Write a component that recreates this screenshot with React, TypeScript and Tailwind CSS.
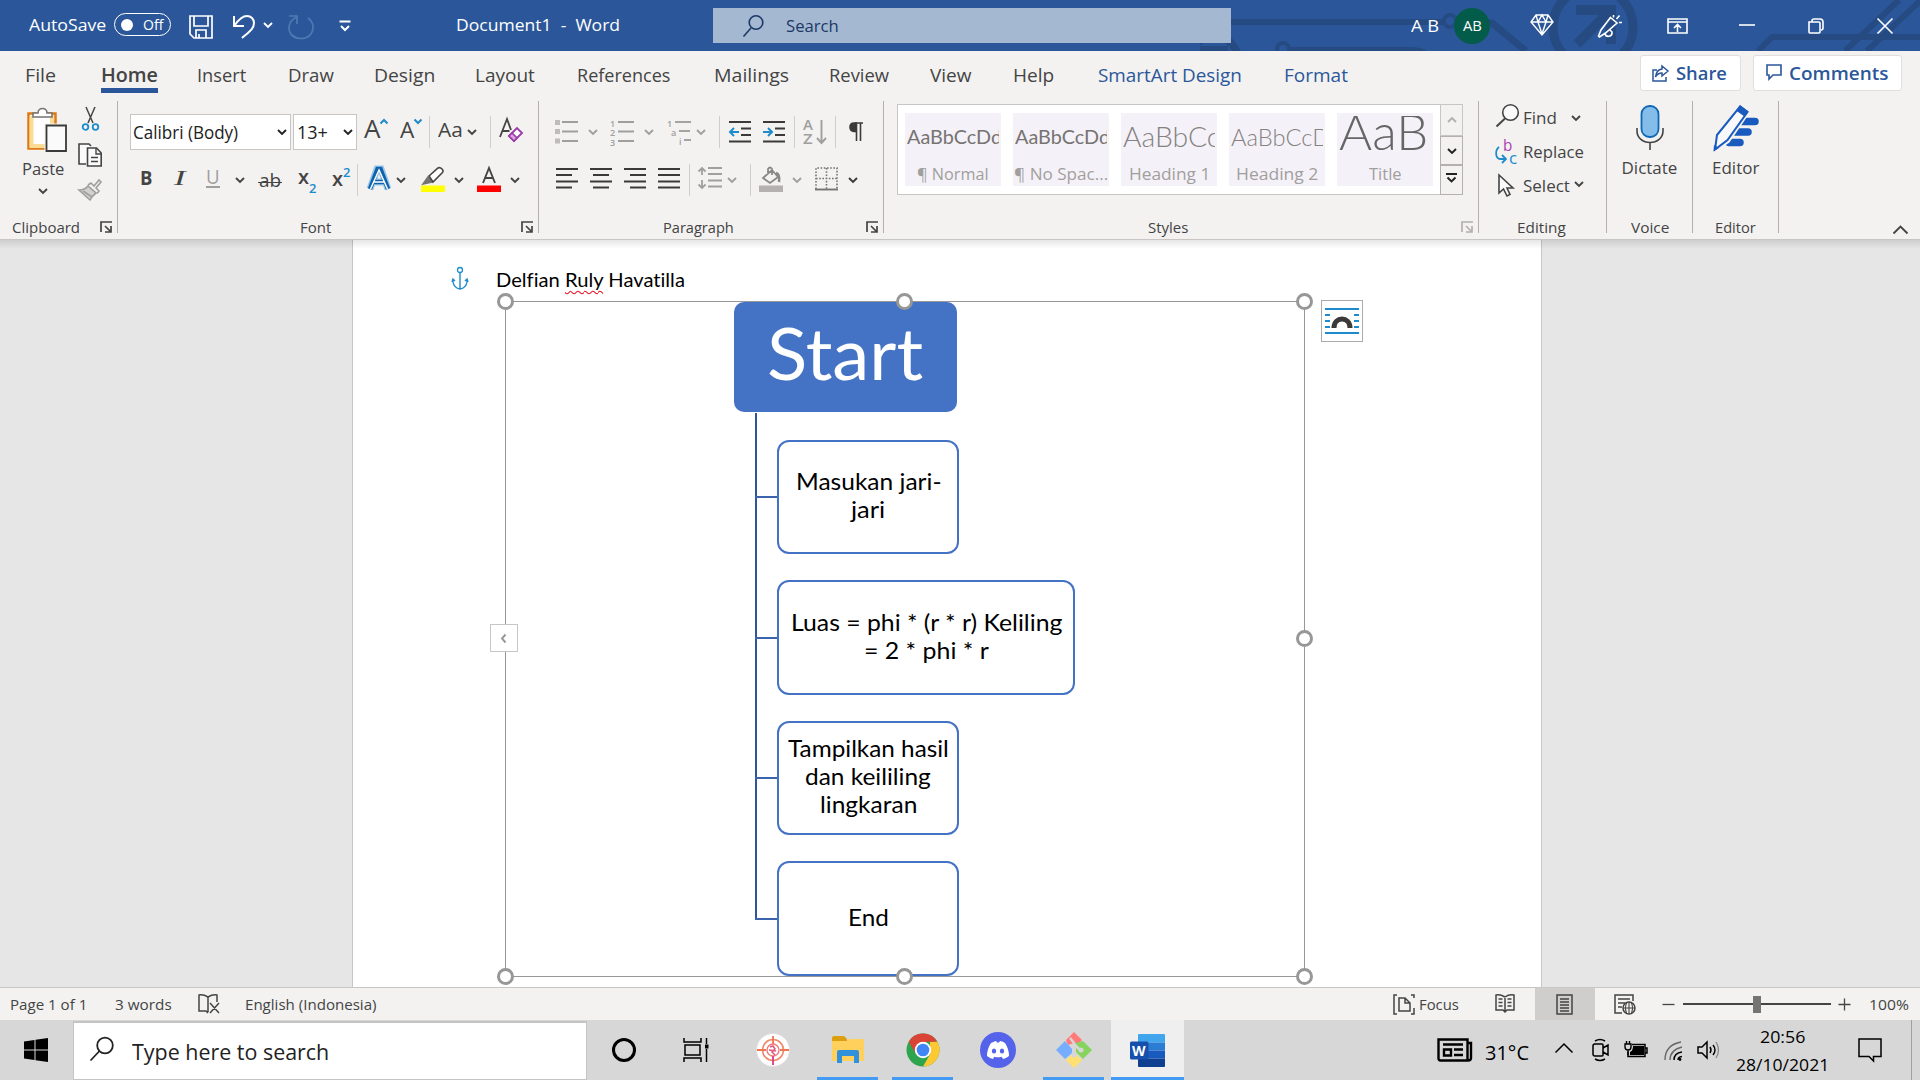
import { useLayoutEffect, useRef, useState, type ReactNode } from "react";

const UI = "font-['Open_Sans','Noto_Sans',sans-serif]";
const BODY = "font-['Lato','Open_Sans',sans-serif] [font-variant-ligatures:none]";

/* A single line of text condensed or widened to an exact advance width. */
function Fit({ w, className = "", children }: { w: number; className?: string; children: ReactNode }) {
  const ref = useRef<HTMLSpanElement>(null);
  const [scale, setScale] = useState(1);
  useLayoutEffect(() => {
    const natural = ref.current?.offsetWidth ?? w;
    if (natural) setScale(w / natural);
  }, [w]);
  return (
    <span className={`block shrink-0 whitespace-pre ${className}`} style={{ width: w }}>
      <span ref={ref} className="inline-block origin-left" style={{ transform: `scaleX(${scale})` }}>
        {children}
      </span>
    </span>
  );
}

function Ico({ w, h, className = "", children }: { w: number; h: number; className?: string; children: ReactNode }) {
  return (
    <svg width={w} height={h} viewBox={`0 0 ${w} ${h}`} fill="none" stroke="currentColor" strokeWidth="1.6" className={`block shrink-0 overflow-visible ${className}`}>
      {children}
    </svg>
  );
}

function Chev({ className = "" }: { className?: string }) {
  return (
    <Ico w={10} h={6} className={className}>
      <path d="M1 1l4 4 4-4" strokeWidth="1.9" />
    </Ico>
  );
}

function Div({ className = "" }: { className?: string }) {
  return <div className={`h-8 w-px shrink-0 bg-[#d0cecc] ${className}`} />;
}

function Launcher({ className = "" }: { className?: string }) {
  return (
    <Ico w={12} h={12} className={className}>
      <path d="M1 11V1h11M5 5l5.500 5.500M11 5v6H5" strokeWidth="1.7" />
    </Ico>
  );
}

function TitleBar() {
  return (
    <header className="relative h-[51px] overflow-hidden bg-[#2b579a] text-white">
      <svg className="absolute top-0 right-0" width="720" height="51" fill="none" stroke="#264b82" strokeWidth="6">
        <path d="M30 22h213" />
        <circle cx="250" cy="21" r="6" strokeWidth="4" />
        <path d="M286 23h6l34 28" strokeWidth="7" />
        <path d="M90 49h120q12 0 16 4" strokeWidth="4" />
        <circle cx="83" cy="49" r="6" strokeWidth="4" />
        <circle cx="14" cy="60" r="24" strokeWidth="8" />
        <path d="M0 49h28" strokeWidth="6" />
        <circle cx="393" cy="27" r="40" strokeWidth="9" />
        <path d="M376 10h35v34M409 12l-32 32" strokeWidth="10" />
        <path d="M558 51l14-14h148M645 51l54-51M667 51l54-51" strokeWidth="6" />
      </svg>
      <div className="relative flex h-[49px] items-center pl-[29px] text-[17px] leading-none">
        <Fit w={77}>AutoSave</Fit>
        <div className="ml-2 flex h-[23px] w-[57px] shrink-0 items-center rounded-full border border-white pl-[6px]">
          <div className="size-3 rounded-full bg-white" />
          <Fit w={20} className="ml-[10px] text-[14px]">Off</Fit>
        </div>
        <Ico w={24} h={24} className="mt-1 ml-[18px]">
          <path d="M1 1h22v22H5l-4-4zM5 1v10h14V1M7 23v-8h10v8M10 23v-4" strokeWidth="1.7" />
        </Ico>
        <Ico w={22} h={24} className="mt-1 ml-5">
          <path d="M1 1v10h10M1.500 10.500C6 4 10 1 14 1c4 0 7 3 7 7 0 6-5 9-12 15" strokeWidth="2" />
        </Ico>
        <Chev className="mt-px ml-2" />
        <Ico w={26} h={24} className="mt-1 ml-[15px] text-[#5079b3]">
          <path d="M1 1h8v8M9 2C4 4 1 8 1 13c0 6 5 10.500 12 10.500S25 19 25 12c0-4-2-7-5-9" strokeWidth="1.7" />
        </Ico>
        <Ico w={12} h={11} className="mt-[2px] ml-[25px]">
          <path d="M0.500 1.500h11M2 6l4 4 4-4" strokeWidth="2" />
        </Ico>
        <Fit w={164} className="ml-[105px]">{"Document1  -  Word"}</Fit>
        <div className="mt-[2px] ml-[93px] flex h-[35px] w-[518px] shrink-0 items-center bg-[#a5b8d1] pl-[30px] text-[#1b3866]">
          <Ico w={21} h={22}>
            <circle cx="13" cy="7.500" r="6.800" />
            <path d="M8 13l-7.500 8.500" />
          </Ico>
          <Fit w={53} className="ml-[22px]">Search</Fit>
        </div>
        <Fit w={28} className="mt-[2px] ml-[180px]">A B</Fit>
        <div className="mt-[2px] ml-[15px] flex size-9 shrink-0 items-center justify-center rounded-full bg-[#035c4a] text-[14px]">
          <Fit w={19}>AB</Fit>
        </div>
        <Ico w={24} h={22} className="ml-10">
          <path d="M6 1h12l5 7-11 13L1 8zM1 8h22M8 8l4 12 4-12M6 1l2 7 4-7 4 7 2-7" strokeWidth="1.400" />
        </Ico>
        <Ico w={25} h={24} className="mt-[2px] ml-11">
          <path d="M12.500 3.500l6.500 5.500-11.500 10-6 4-1-1 2.500-6zM7 19.500c1 4.500 7.500 3.500 7-1.500l-2-2M15.500 3.500V1M18.500 5l3-3.500M21 8.500h3" strokeWidth="1.600" />
        </Ico>
        <Ico w={21} h={16} className="mt-[2px] ml-11">
          <path d="M1 1h19v14H1zM1 4h19M10.500 14V7M7 10l3.500-3.500L14 10" strokeWidth="1.600" />
        </Ico>
        <Ico w={16} h={2} className="ml-[51px]"><path d="M0 1h16" /></Ico>
        <Ico w={16} h={16} className="mt-[2px] ml-[53px]">
          <path d="M1 4h10q1 0 1 1v9q0 1-1 1H2q-1 0-1-1zM4 4V3q0-2 2-2h6q3 0 3 3v6q0 2-2 2" />
        </Ico>
        <Ico w={16} h={16} className="mt-[2px] ml-[53px]"><path d="M0.500 0.500l15 15M15.500 0.500l-15 15" /></Ico>
      </div>
    </header>
  );
}

function Tabs() {
  return (
    <nav className="flex h-[50px] items-start pt-[11px] pl-[25px] text-[19px] leading-[26px] text-[#444444]">
      <Fit w={31}>File</Fit>
      <div className="ml-[45px] w-[57px] shrink-0">
        <Fit w={57} className="font-semibold">Home</Fit>
        <div className="h-[5px] bg-[#2b579a]" />
      </div>
      <Fit w={49} className="ml-[39px]">Insert</Fit>
      <Fit w={46} className="ml-[42px]">Draw</Fit>
      <Fit w={61} className="ml-10">Design</Fit>
      <Fit w={60} className="ml-[40px]">Layout</Fit>
      <Fit w={93} className="ml-[42px]">References</Fit>
      <Fit w={75} className="ml-[44px]">Mailings</Fit>
      <Fit w={60} className="ml-[40px]">Review</Fit>
      <Fit w={42} className="ml-[41px]">View</Fit>
      <Fit w={41} className="ml-[41px]">Help</Fit>
      <Fit w={144} className="ml-[44px] text-[#2b579a]">SmartArt Design</Fit>
      <Fit w={64} className="ml-[42px] text-[#2b579a]">Format</Fit>
      <div className="-mt-[7px] ml-[292px] flex h-9 w-[101px] shrink-0 items-center rounded-[3px] border border-[#e1dfdd] bg-white pl-[11px] text-[18px] font-semibold text-[#2b579a]">
        <Ico w={17} h={17}>
          <path d="M5 5H1v11h13v-4M10 1l6 5-6 5V8C7 8 5 9 3.500 12 4 7 6 4.500 10 4z" strokeWidth="1.500" />
        </Ico>
        <Fit w={51} className="ml-[7px]">Share</Fit>
      </div>
      <div className="-mt-[7px] ml-3 flex h-9 w-[149px] shrink-0 items-center rounded-[3px] border border-[#e1dfdd] bg-white pl-3 text-[18px] font-semibold text-[#2b579a]">
        <Ico w={16} h={16} className="-mt-[2px]"><path d="M1 1h14v10H7l-4 4v-4H1z" strokeWidth="1.600" /></Ico>
        <Fit w={99} className="ml-[7px]">Comments</Fit>
      </div>
    </nav>
  );
}

function Group({ className, label, children }: { className: string; label: ReactNode; children: ReactNode }) {
  return (
    <section className={`flex h-[132px] shrink-0 flex-col border-r border-[#b3b0ad] ${className}`}>
      {children}
      <div className="mt-auto flex h-3 items-center text-[15px] leading-none">{label}</div>
    </section>
  );
}

function ClipboardGroup() {
  return (
    <Group className="w-[118px]" label={<><Fit w={68} className="ml-[12px]">Clipboard</Fit><Launcher className="ml-5" /></>}>
      <div className="flex pt-[6px]">
        <div className="ml-[21px] flex w-[43px] flex-col items-center">
          <Ico w={41} h={45} className="ml-2">
            <path d="M2.500 6.500h27v35h-27z" fill="#fff" stroke="#e07914" strokeWidth="2.500" />
            <path d="M5.500 9v30h21" stroke="#fbdc94" strokeWidth="4" />
            <path d="M26 8v11" stroke="#fbdc94" strokeWidth="4" />
            <path d="M7 10V6h5c0-6 9-6 9 0h5v4z" fill="#fff" stroke="#767472" />
            <path d="M20.500 18.500h20v26h-20z" fill="#fafafa" stroke="#f3f2f1" strokeWidth="4" />
            <path d="M20.500 18.500h19.500v25.500h-19.500z" fill="#fafafa" stroke="#3b3a39" strokeWidth="1.800" />
          </Ico>
          <Fit w={42} className="mt-[7px] text-[17px] leading-[20px]">Paste</Fit>
          <Chev className="mt-[9px]" />
        </div>
        <div className="ml-[14px] flex w-6 flex-col items-center">
          <Ico w={17} h={24}>
            <path d="M4 0l7 16M13 0L6 16" strokeWidth="1.500" />
            <circle cx="3.500" cy="20" r="2.800" stroke="#1e8bcd" strokeWidth="1.800" />
            <circle cx="13.500" cy="20" r="2.800" stroke="#1e8bcd" strokeWidth="1.800" />
          </Ico>
          <Ico w={24} h={24} className="mt-3">
            <path d="M8 21H1V1h10l2 2" fill="#fafafa" />
            <path d="M9.500 5h9l4.700 5v13H9.500z" fill="#fafafa" />
            <path d="M18 5v6h5M13 14.500h7M13 18.500h7" strokeWidth="1.400" />
          </Ico>
          <Ico w={24} h={22} className="mt-3 text-[#a19f9d]">
            <path d="M1 11q6 0 9-4l8 7q-4 3-6 7z" fill="#d2d0ce" />
            <path d="M10 6l3-2 3 3 5-6 2 2-5 6 3 3-2 2.500M5 12l9 6" />
          </Ico>
        </div>
      </div>
    </Group>
  );
}

function FontGroup() {
  return (
    <Group className="w-[421px]" label={<><Fit w={31} className="ml-[182px]">Font</Fit><Launcher className="ml-[190px]" /></>}>
      <div className="mt-[13px] flex h-[35px] items-center">
        <div className="ml-3 flex h-9 w-[161px] shrink-0 items-center border border-[#c8c6c4] bg-white pl-[2px] text-[18px] leading-none text-[#222]">
          <Fit w={105}>Calibri (Body)</Fit>
          <Chev className="ml-[39px]" />
        </div>
        <div className="ml-[2px] flex h-9 w-16 shrink-0 items-center border border-[#c8c6c4] bg-white pl-[3px] text-[18px] leading-none text-[#222]">
          <Fit w={31}>13+</Fit>
          <Chev className="ml-[15px]" />
        </div>
        <div className="ml-[7px] flex h-[28px] w-[23px] shrink-0 items-start">
          <Fit w={16} className="-mt-[4px] text-[26px] leading-[28px]">A</Fit>
          <Ico w={8} h={5} className="mt-px text-[#1e8bcd]"><path d="M0.500 4.500l3.500-3.500 3.500 3.500" strokeWidth="2" /></Ico>
        </div>
        <div className="ml-[13px] flex h-[28px] w-[21px] shrink-0 items-start">
          <Fit w={14} className="-mt-[2px] text-[21px] leading-[28px]">A</Fit>
          <Ico w={8} h={5} className="mt-px text-[#1e8bcd]"><path d="M0.500 0.500l3.500 3.500 3.500-3.500" strokeWidth="2" /></Ico>
        </div>
        <Div className="ml-[8px]" />
        <Fit w={25} className="-mt-[3px] ml-2 text-[20px] leading-none">Aa</Fit>
        <Chev className="ml-1" />
        <Div className="ml-[13px]" />
        <Ico w={23} h={24} className="-mt-[3px] ml-[8px]">
          <path d="M1 19L8 1l4 11M3.500 13h7" strokeWidth="1.800" />
          <path d="M10 18l8-8 5 5-8 8z" fill="#fff" stroke="#9b3aa8" strokeWidth="1.900" />
          <path d="M10 18l3-3 5 5-3 3z" fill="#d6a8dc" stroke="#9b3aa8" />
        </Ico>
      </div>
      <div className="mt-[14px] flex h-[34px] items-center text-[20px] leading-none">
        <Fit w={12} className="-mt-1 ml-[22px] font-bold">B</Fit>
        <Fit w={11} className="-mt-1 ml-[22px] font-['Liberation_Serif',serif] text-[22px] italic">I</Fit>
        <div className="-mt-px ml-[21px] flex w-[14px] shrink-0 flex-col text-[#a19f9d]">
          <Fit w={14} className="-mt-1 h-[19px]">U</Fit>
          <div className="h-[2px] bg-[#a19f9d]" />
        </div>
        <Chev className="ml-[15px]" />
        <div className="relative ml-[13px] w-6 shrink-0">
          <Fit w={22} className="ml-px text-[19px]">ab</Fit>
          <div className="absolute top-[11px] h-[1.500px] w-6 bg-[#444]" />
        </div>
        <div className="ml-[16px] flex w-[18px] shrink-0 items-end">
          <Fit w={11} className="mb-[6px] font-semibold">x</Fit>
          <Fit w={7} className="-mb-[2px] text-[13px] font-semibold text-[#1e8bcd]">2</Fit>
        </div>
        <div className="ml-[16px] flex w-[18px] shrink-0 items-end">
          <Fit w={11} className="mb-[6px] font-semibold">x</Fit>
          <Fit w={7} className="mb-[16px] text-[13px] font-semibold text-[#1e8bcd]">2</Fit>
        </div>
        <Div className="ml-[7px]" />
        <Ico w={23} h={24} className="-mt-[2px] ml-[9px]">
          <path d="M3 22L10 2h4l7 20M7 15h10" stroke="#9bc8ec" strokeWidth="7" />
          <path d="M3 22L10.500 2h3L21 22M7 15h10" stroke="#0f63ac" strokeWidth="4.500" />
          <path d="M3.500 22L12 3l8.500 19M7 15h10" stroke="#fff" strokeWidth="1.500" />
        </Ico>
        <Chev className="ml-[6px]" />
        <Ico w={24} h={25} className="-mt-[2px] ml-[15px]">
          <path d="M0 18.500h24v6.500H0z" fill="#ffff00" stroke="none" />
          <path d="M7 10l-5 7 9-2z" fill="#767472" stroke="#767472" />
          <path d="M8 9L17 1q2-1 4 1 2 2 0 4l-9 9z" fill="#fff" />
        </Ico>
        <Chev className="ml-[9px]" />
        <Ico w={24} h={25} className="-mt-[2px] ml-[13px]">
          <path d="M0 18.500h24v6.500H0z" fill="#ff0000" stroke="none" />
          <path d="M6 16L12 1l6 15M8.500 11h7" strokeWidth="1.900" />
        </Ico>
        <Chev className="ml-[9px]" />
      </div>
    </Group>
  );
}

function ParagraphGroup() {
  return (
    <Group className="w-[345px]" label={<><Fit w={71} className="ml-[124px]">Paragraph</Fit><Launcher className="ml-[132px]" /></>}>
      <div className="mt-[13px] flex h-[35px] items-center text-[#a19f9d]">
        <Ico w={23} h={24} className="ml-4">
          <path d="M7 2h16M7 11.500h16M7 21h16" strokeWidth="1.900" />
          <path d="M0 0h5v5H0zM0 9h5v5H0zM0 18.500h5v5H0z" fill="#bebbb8" stroke="none" />
        </Ico>
        <Chev className="mt-px ml-[10px]" />
        <div className="ml-3 flex h-[24px] shrink-0 gap-[3px]">
          <div className="-mt-px flex w-[5px] flex-col text-[9px] leading-[9.500px] font-semibold"><span>1</span><span>2</span><span>3</span></div>
          <Ico w={16} h={24}><path d="M0 2h16M0 11.500h16M0 21h16" strokeWidth="1.900" /></Ico>
        </div>
        <Chev className="mt-px ml-[10px]" />
        <div className="ml-[13px] flex h-6 w-[23px] shrink-0 flex-col text-[9px] leading-[9.500px] font-semibold">
          <div className="flex gap-[3px]"><span className="-mt-px">1</span><Ico w={16} h={9}><path d="M0 2h16" strokeWidth="1.900" /></Ico></div>
          <div className="ml-1 flex gap-[3px]"><span className="-mt-px">a</span><Ico w={11} h={9}><path d="M0 2h11" strokeWidth="1.900" /></Ico></div>
          <div className="ml-3 flex gap-[2px]"><span className="-mt-px">i</span><Ico w={7} h={9}><path d="M0 2h7" strokeWidth="1.900" /></Ico></div>
        </div>
        <Chev className="mt-px ml-[6px]" />
        <Div className="ml-[13px]" />
        <Ico w={22} h={22} className="ml-[9px] text-[#3b3a39]">
          <path d="M0 1h22M12 7.500h10M12 14h10M0 20.500h22" strokeWidth="1.900" />
          <path d="M10 11H1M5 7l-4 4 4 4" stroke="#1e8bcd" strokeWidth="2" />
        </Ico>
        <Ico w={22} h={22} className="ml-3 text-[#3b3a39]">
          <path d="M0 1h22M12 7.500h10M12 14h10M0 20.500h22" strokeWidth="1.900" />
          <path d="M0 11h9M5 7l4 4-4 4" stroke="#1e8bcd" strokeWidth="2" />
        </Ico>
        <Div className="ml-[9px]" />
        <div className="ml-2 flex h-[26px] w-[25px] shrink-0 items-center gap-[2px]">
          <div className="-mt-[2px] flex w-[11px] flex-col text-[15px] leading-[14px] font-semibold"><Fit w={10}>A</Fit><Fit w={10}>Z</Fit></div>
          <Ico w={11} h={24}><path d="M5.500 0v23M1 18l4.500 5 4.500-5" strokeWidth="1.900" /></Ico>
        </div>
        <Div className="ml-[7px]" />
        <Ico w={14} h={19} className="ml-[13px] text-[#3b3a39]">
          <path d="M7 1h-2q-4 0-4 4t4 4.500h2z" fill="currentColor" />
          <path d="M7.500 1v18M11.500 1v18M6 1h8" />
        </Ico>
      </div>
      <div className="mt-[14px] flex h-[34px] items-center text-[#3b3a39]">
        <Ico w={22} h={21} className="-mt-1 ml-[17px]"><path d="M0 1h22M0 7h16M0 13.500h22M0 19.500h16" strokeWidth="1.900" /></Ico>
        <Ico w={22} h={21} className="-mt-1 ml-3"><path d="M0 1h22M3 7h16M0 13.500h22M3 19.500h16" strokeWidth="1.900" /></Ico>
        <Ico w={22} h={21} className="-mt-1 ml-3"><path d="M0 1h22M6 7h16M0 13.500h22M6 19.500h16" strokeWidth="1.900" /></Ico>
        <Ico w={22} h={21} className="-mt-1 ml-3"><path d="M0 1h22M0 7h22M0 13.500h22M0 19.500h22" strokeWidth="1.900" /></Ico>
        <Div className="ml-[9px]" />
        <Ico w={24} h={22} className="-mt-1 ml-2 text-[#a19f9d]"><path d="M10 1h14M10 7h14M10 13.500h14M10 19.500h14M4 1v7M4 13v8M0.500 4.500L4 1l3.500 3.500M0.500 17.500L4 21l3.500-3.500" strokeWidth="1.800" /></Ico>
        <Chev className="ml-[5px] text-[#a19f9d]" />
        <Div className="ml-[13px]" />
        <Ico w={24} h={25} className="-mt-[2px] ml-2 text-[#8a8886]">
          <path d="M0 18.500h24v6.500H0z" fill="#b5b1ae" stroke="none" />
          <path d="M4 11L13 3l6 7-8 6zM9 8V2q2-3 4 0v6" strokeWidth="1.800" />
          <path d="M17 6q4 1 3 9" strokeWidth="2.500" />
        </Ico>
        <Chev className="ml-[9px] text-[#a19f9d]" />
        <Ico w={23} h={24} className="-mt-[2px] ml-[13px] text-[#767472]">
          <path d="M1 22V1h21v21M11.500 1v21M1 11.500h21" strokeDasharray="1.600 1.600" />
          <path d="M0 22.500h23" strokeWidth="1.900" />
        </Ico>
        <Chev className="ml-[10px]" />
      </div>
    </Group>
  );
}

function StyleCard({ preview, label }: { preview: ReactNode; label: ReactNode }) {
  return (
    <div className="flex h-[73px] w-24 shrink-0 flex-col bg-[#f5f1f8] pt-[3px]">
      <div className={`ml-[2px] flex h-[45px] w-[92px] items-center overflow-hidden text-[#767472] ${BODY}`}>{preview}</div>
      <div className="flex h-[25px] items-center justify-center text-[16px] leading-none text-[#a19f9d]">{label}</div>
    </div>
  );
}

function StylesGroup() {
  return (
    <Group className="w-[595px]" label={<><Fit w={40} className="ml-[264px]">Styles</Fit><Launcher className="ml-[273px] text-[#b3b0ad]" /></>}>
      <div className="mt-[3px] ml-[13px] flex h-[91px] w-[566px] border border-[#c8c6c4] bg-white">
        <div className="flex w-[542px] shrink-0 gap-3 pt-2 pl-[7px]">
          <StyleCard preview={<Fit w={95} className="-mt-[5px] text-[20px] leading-[24px]">AaBbCcDd</Fit>} label={<Fit w={72}>¶ Normal</Fit>} />
          <StyleCard preview={<Fit w={95} className="-mt-[5px] text-[20px] leading-[24px]">AaBbCcDd</Fit>} label={<Fit w={94}>¶ No Spac...</Fit>} />
          <StyleCard preview={<Fit w={97} className="-mt-[5px] text-[28px] leading-none font-light text-[#858381]">AaBbCc</Fit>} label={<Fit w={81}>Heading 1</Fit>} />
          <StyleCard preview={<Fit w={99} className="-mt-[3px] text-[23px] leading-none font-light text-[#858381]">AaBbCcD</Fit>} label={<Fit w={82}>Heading 2</Fit>} />
          <StyleCard preview={<Fit w={89} className="-mt-[16px] text-[50px] leading-none font-light text-[#666]">AaB</Fit>} label={<Fit w={33}>Title</Fit>} />
        </div>
        <div className="-my-px -mr-px flex w-[23px] shrink-0 flex-col text-[#222]">
          <div className="flex h-8 items-center justify-center border border-[#c8c6c4] bg-[#f3f2f1] text-[#b3b0ad]"><Chev className="rotate-180" /></div>
          <div className="flex h-[29px] items-center justify-center border border-[#b3b0ad] bg-[#f3f2f1]"><Chev /></div>
          <div className="flex h-[30px] items-center justify-center border border-[#b3b0ad] bg-[#f3f2f1]">
            <Ico w={11} h={10} className="-mt-1"><path d="M0 1h11M1.500 4.500l4 4 4-4" strokeWidth="1.900" /></Ico>
          </div>
        </div>
      </div>
    </Group>
  );
}

function EditingGroup() {
  return (
    <Group className="w-[128px]" label={<Fit w={49} className="ml-[38px]">Editing</Fit>}>
      <div className="flex flex-col text-[17px] leading-none">
        <div className="flex h-[33px] items-center pl-[17px]">
          <Ico w={23} h={23} className="-mt-1">
            <circle cx="14.500" cy="8.500" r="7.800" fill="#fafafa" />
            <path d="M9 14.500L0.500 22.500" strokeWidth="1.900" />
          </Ico>
          <Fit w={34} className="-mt-px ml-1">Find</Fit>
          <Chev className="ml-[14px]" />
        </div>
        <div className="flex h-[35px] items-center pl-4">
          <div className="flex h-[25px] w-[22px] shrink-0 items-end">
            <Ico w={12} h={19}><path d="M4 2C0 5 0 13 5 14h6M7 10l4 4-4 4" stroke="#1e8bcd" strokeWidth="1.800" /></Ico>
            <div className="-ml-1 flex w-[13px] flex-col text-[17px] leading-[12px]">
              <Fit w={9} className="text-[#a83fb0]">b</Fit>
              <Fit w={8} className="mt-px ml-[6px] text-[#1e8bcd]">c</Fit>
            </div>
          </div>
          <Fit w={61} className="ml-[6px]">Replace</Fit>
        </div>
        <div className="flex h-[34px] items-center pl-[19px]">
          <Ico w={16} h={23} className="-mt-[2px]"><path d="M1 1v18l4.500-4 3.500 7 3-1.500-3-6.500h6z" fill="#fafafa" /></Ico>
          <Fit w={47} className="-mt-[2px] ml-[9px]">Select</Fit>
          <Chev className="-mt-[4px] ml-1" />
        </div>
      </div>
    </Group>
  );
}

function Ribbon() {
  return (
    <div className="flex h-[138px] text-[#444444]">
      <ClipboardGroup />
      <FontGroup />
      <ParagraphGroup />
      <StylesGroup />
      <EditingGroup />
      <Group className="w-[86px]" label={<Fit w={38} className="ml-6">Voice</Fit>}>
        <div className="flex flex-col items-center pt-1">
          <Ico w={28} h={45}>
            <rect x="5.500" y="1" width="17" height="31" rx="8" fill="#85bdea" stroke="#1068b5" strokeWidth="1.800" />
            <path d="M1 23v3c0 7 6 11.500 13 11.500S27 33 27 26v-3M14 37.500V45" />
          </Ico>
          <Fit w={56} className="mt-2 text-[17px] leading-[20px]">Dictate</Fit>
        </div>
      </Group>
      <Group className="w-[86px]" label={<Fit w={41} className="ml-[22px]">Editor</Fit>}>
        <div className="flex flex-col items-center pt-1">
          <Ico w={46} h={46}>
            <path d="M27 16.500h15M22 27h13M16 37.500h11" stroke="#185abd" strokeWidth="7.500" strokeLinecap="round" />
            <path d="M27 1l8 6-20 29-13 9 2-15z" fill="#f9f9fb" stroke="#f3f2f1" strokeWidth="4" />
            <path d="M27 1.500l7.500 5.500-20 28L2 44.500l2-14.500z" fill="#f9f9fb" stroke="#185abd" strokeWidth="2" />
            <path d="M27 0l8.500 6.500-4 5L23 5.500zM1 40l5 3-5.500 3z" fill="#185abd" stroke="none" />
          </Ico>
          <Fit w={47} className="mt-[7px] text-[17px] leading-[20px]">Editor</Fit>
        </div>
      </Group>
      <Ico w={15} h={8} className="mt-[125px] ml-[114px]"><path d="M0.500 7.500l7-7 7 7" strokeWidth="1.800" /></Ico>
    </div>
  );
}

function Handle({ className }: { className: string }) {
  return <div className={`absolute size-[17px] rounded-full border-[3px] border-[#979797] bg-white ${className}`} />;
}

function Node({ className, lines }: { className: string; lines: [string, number][] }) {
  return (
    <div className={`absolute left-[424px] flex flex-col items-center justify-center rounded-[12px] border-2 border-[#4472c4] bg-white pb-[2px] text-[22.500px] leading-[28px] ${BODY} ${className}`}>
      {lines.map(([text, w]) => (
        <Fit key={text} w={w}>{text}</Fit>
      ))}
    </div>
  );
}

function Page() {
  return (
    <main className="h-[747px] overflow-hidden bg-[#e6e6e6]">
      <div className="relative ml-[352px] h-full w-[1190px] border-x border-[#c6c6c6] bg-white text-black">
        <Ico w={16} h={23} className="absolute top-[27px] left-[99px] text-[#1e8bcd]">
          <circle cx="8" cy="3" r="2.500" strokeWidth="1.300" />
          <path d="M8 5.500V22M1 12v3q1 6 7 7 6-1 7-7v-3M0 15l1-3 2 2M16 15l-1-3-2 2" strokeWidth="1.400" />
        </Ico>
        <div className={`absolute top-[28px] left-[143px] flex text-[19px] leading-[24px] ${BODY}`}>
          <Fit w={189}>
            Delfian <span className="underline decoration-[#e81123] decoration-wavy decoration-[1px] underline-offset-[3px]">Ruly</span> Havatilla
          </Fit>
        </div>

        <div className="absolute top-[61px] left-[152px] h-[676px] w-[800px] border border-[#979797]" />
        <div className={`absolute top-[62px] left-[381px] flex h-[110px] w-[223px] justify-center rounded-[10px] bg-[#4472c4] pt-[7px] text-[72px] leading-[86px] text-white ${BODY}`}>
          <Fit w={156} className="-ml-[2px]">Start</Fit>
        </div>
        <div className="absolute top-[173px] left-[402px] h-[507px] w-[2px] bg-[#2f5597]" />
        <div className="absolute top-[256px] left-[402px] h-[2px] w-[23px] bg-[#3c64ac]" />
        <div className="absolute top-[397px] left-[402px] h-[2px] w-[23px] bg-[#3c64ac]" />
        <div className="absolute top-[537px] left-[402px] h-[2px] w-[23px] bg-[#3c64ac]" />
        <div className="absolute top-[678px] left-[402px] h-[2px] w-[23px] bg-[#3c64ac]" />
        <Node className="top-[200px] h-[114px] w-[182px]" lines={[["Masukan jari-", 145], ["jari", 34]]} />
        <Node className="top-[340px] h-[115px] w-[298px]" lines={[["Luas = phi * (r * r) Keliling", 271], ["= 2 * phi * r", 125]]} />
        <Node className="top-[481px] h-[114px] w-[182px]" lines={[["Tampilkan hasil", 161], ["dan keililing", 126], ["lingkaran", 97]]} />
        <Node className="top-[621px] h-[115px] w-[182px]" lines={[["End", 41]]} />

        <Handle className="top-[53px] left-[144px]" />
        <Handle className="top-[53px] left-[543px]" />
        <Handle className="top-[53px] left-[943px]" />
        <Handle className="top-[390px] left-[943px]" />
        <Handle className="top-[728px] left-[144px]" />
        <Handle className="top-[728px] left-[543px]" />
        <Handle className="top-[728px] left-[943px]" />
        <div className="absolute top-[384px] left-[137px] flex h-7 w-7 items-center justify-center border border-[#c6c6c6] bg-white pr-[2px] text-[#979797]">
          <Ico w={5} h={9}><path d="M4.500 0.500l-3.500 4 3.500 4" strokeWidth="1.900" /></Ico>
        </div>
        <div className="absolute top-[60px] left-[968px] flex size-[42px] items-center justify-center border border-[#ababab] bg-white">
          <Ico w={34} h={26}>
            <path d="M0 1h34M0 7h5M29 7h5M0 13h5M29 13h5M0 19h5M29 19h5M0 25h34" stroke="#1e8bcd" strokeWidth="1.800" />
            <path d="M9 20c0-12 16-12 16 0" stroke="#3b3a39" strokeWidth="5" />
          </Ico>
        </div>
      </div>
    </main>
  );
}

function StatusBar() {
  return (
    <footer className="flex h-[33px] items-center border-t border-[#c6c6c6] bg-[#f3f2f1] text-[14.500px] leading-none text-[#444444]">
      <Fit w={77} className="mt-[2px] ml-[10px]">Page 1 of 1</Fit>
      <Fit w={57} className="mt-[2px] ml-7">3 words</Fit>
      <Ico w={22} h={20} className="ml-[26px]">
        <path d="M10 18V3Q5 0 1 1v16h7l2 2M10 3q5-3 9-2v7M12 9l9 10M21 9l-9 10" strokeWidth="1.500" />
      </Ico>
      <Fit w={131} className="mt-[2px] ml-[25px]">English (Indonesia)</Fit>
      <Ico w={22} h={21} className="ml-[1017px]">
        <path d="M4 1H1v19h3M18 1h3v3M18 20h3v-6M6 4h6l5 5v8H6zM12 4v5h5" strokeWidth="1.500" />
      </Ico>
      <Fit w={40} className="mt-[2px] ml-[4px]">Focus</Fit>
      <Ico w={20} h={20} className="-mt-px ml-[36px]">
        <path d="M10 4v15M10 3Q5 0 1 1v15h7l2 2 2-2h7V1q-5-1-9 2M3.500 5h4M3.500 8.500h4M3.500 12h4M12.500 5h4M12.500 8.500h4M12.500 12h4" strokeWidth="1.500" />
      </Ico>
      <div className="ml-5 flex h-8 w-[60px] shrink-0 items-center justify-center bg-[#d0cecd] pr-[2px]">
        <Ico w={17} h={21}><path d="M1 1h15v19H1zM4 5h9M4 8h9M4 11h9M4 14h9M4 17h9" strokeWidth="1.500" /></Ico>
      </div>
      <Ico w={22} h={21} className="ml-[19px]">
        <path d="M8 19H1V1h18v6M4 5h12M4 9h7M4 13h4" strokeWidth="1.500" />
        <circle cx="15" cy="14" r="6" strokeWidth="1.500" />
        <path d="M15 8v12M9 14h12M12.500 9q-2 5 0 10M17.500 9q2 5 0 10" strokeWidth="1.100" />
      </Ico>
      <Ico w={13} h={1} className="ml-[26px]"><path d="M0.500 0.500h12" strokeWidth="1.300" /></Ico>
      <div className="ml-2 flex h-[17px] w-[148px] shrink-0 items-center">
        <div className="h-[2px] w-[70px] bg-[#444]" />
        <div className="h-[17px] w-[8px] bg-[#767472]" />
        <div className="h-[2px] w-[70px] bg-[#444]" />
      </div>
      <Ico w={13} h={13} className="ml-[7px]"><path d="M0.500 6.500h12M6.500 0.500v12" strokeWidth="1.300" /></Ico>
      <Fit w={40} className="mt-[2px] ml-[18px]">100%</Fit>
    </footer>
  );
}

function TaskSlot({ className = "", bar = false, children }: { className?: string; bar?: boolean; children: ReactNode }) {
  return (
    <div className={`flex h-[60px] shrink-0 flex-col items-center ${className}`}>
      <div className="flex h-[57px] items-center pt-[3px]">{children}</div>
      {bar && <div className="h-[3px] w-full bg-[#429bf5]" />}
    </div>
  );
}

function Taskbar() {
  return (
    <div className="flex h-[60px] items-center bg-[#d7d7d7] text-black">
      <Ico w={24} h={24} className="ml-6">
        <path d="M0 3.500l10.500-1.500v9.500H0zM11.500 1.800L24 0v11.500H11.500zM0 12.500h10.500V22L0 20.500zM11.500 12.500H24V24l-12.500-1.800z" fill="#000" stroke="none" />
      </Ico>
      <div className="ml-[25px] flex h-[59px] w-[514px] shrink-0 items-center border border-t-2 border-[#c4c4c4] bg-white text-[21px] leading-none text-[#222]">
        <Ico w={24} h={24} className="-mt-1 ml-4">
          <circle cx="15" cy="8.500" r="7.800" strokeWidth="1.800" />
          <path d="M9.500 14L0.500 23.500" strokeWidth="1.800" />
        </Ico>
        <Fit w={197} className="mt-[3px] ml-[18px]">Type here to search</Fit>
      </div>
      <div className="ml-[25px] size-6 shrink-0 rounded-full border-[3px] border-black" />
      <Ico w={26} h={24} className="ml-[47px]">
        <path d="M1 0v4h17V0M1 24v-4h17v4M2 7h15v10H2zM23.500 0v6M23.500 11v13" strokeWidth="1.500" />
        <path d="M22 6.500h3.500v4H22z" fill="#000" stroke="none" />
      </Ico>
      <Ico w={34} h={34} className="ml-[47px]">
        <circle cx="17" cy="17" r="16.500" fill="#fff" stroke="#e6dede" strokeWidth="1" />
        <circle cx="17" cy="17" r="10.500" stroke="#f08a6c" strokeWidth="1.600" />
        <circle cx="17" cy="17" r="6" stroke="#ef7d7d" strokeWidth="1.400" />
        <path d="M17 3v8M1 17h9M24 17h9" stroke="#ee7650" strokeWidth="1.800" />
        <path d="M17 23v9" stroke="#e03888" strokeWidth="1.800" />
        <path d="M14 14l3-1 2 3-3 3 3 3M13 17l7 1" stroke="#e4567a" strokeWidth="1.500" />
      </Ico>
      <TaskSlot bar className="ml-[27px] w-[61px]">
        <Ico w={32} h={28}>
          <path d="M0 2q0-2 2-2h10l3 3v6H0z" fill="#dd9f10" stroke="none" />
          <path d="M0 5h15l2-2h14q1 0 1 1v21H0z" fill="#ffd05c" stroke="none" />
          <path d="M5 27V16q0-2 2-2h18q2 0 2 2v11h-5v-7H10v7z" fill="#3191dd" stroke="none" />
        </Ico>
      </TaskSlot>
      <TaskSlot bar className="ml-[14px] w-[61px]">
        <Ico w={34} h={34}>
          <circle cx="17" cy="17" r="16.500" fill="#2da44e" stroke="none" />
          <path d="M17 .5a16.500 16.500 0 0 1 14.300 8.200L17 9l-7 12L2.700 8.700A16.500 16.500 0 0 1 17 .5z" fill="#da4437" stroke="none" />
          <path d="M31.300 8.700A16.500 16.500 0 0 1 17 33.500L24.200 21 24 9z" fill="#fcc934" stroke="none" />
          <circle cx="17" cy="17" r="8.200" fill="#fff" stroke="none" />
          <circle cx="17" cy="17" r="6.300" fill="#4285f4" stroke="none" />
        </Ico>
      </TaskSlot>
      <Ico w={36} h={36} className="ml-[27px]">
        <circle cx="18" cy="18" r="18" fill="#5562ea" stroke="none" />
        <path d="M11 11q4-2 5-2l1 1.500h2L20 9q2 .2 5 2 4 6 4 13-3 2.500-6 3l-1.300-2.300Q18 26 14.300 24.700L13 27q-3-.5-6-3 0-7 4-13z" fill="#fff" stroke="none" />
        <ellipse cx="14" cy="19" rx="2.200" ry="2.500" fill="#5562ea" stroke="none" />
        <ellipse cx="22" cy="19" rx="2.200" ry="2.500" fill="#5562ea" stroke="none" />
      </Ico>
      <TaskSlot bar className="ml-[27px] w-[61px]">
        <Ico w={36} h={36}>
          <path d="M18 0l8 8-5 5-3-2-6 2-2-5z" fill="#ff7a78" stroke="none" />
          <path d="M9 9l7 8v4l-7 6-9-9z" fill="#76adff" stroke="none" />
          <path d="M27 9l9 9-9 9-7-7V11z" fill="#86d45e" stroke="none" />
          <path d="M18 21l8 7-8 8-8-8z" fill="#ffe071" stroke="none" />
          <path d="M14 6l4 5v12M18 12l6 6" stroke="#d7d7d7" strokeWidth="2.500" />
          <circle cx="18" cy="23" r="2.500" fill="#d7d7d7" stroke="none" />
          <circle cx="25" cy="18" r="2.500" fill="#d7d7d7" stroke="none" />
        </Ico>
      </TaskSlot>
      <TaskSlot bar className="ml-[7px] w-[73px] bg-[#efefef]">
        <div className="relative h-[33px] w-[35px]">
          <Ico w={35} h={33}>
            <path d="M8 1q0-1 1-1h25q1 0 1 1v7.500H8z" fill="#41a5ee" stroke="none" />
            <path d="M8 8.500h27v8H8z" fill="#2b7cd3" stroke="none" />
            <path d="M8 16.500h27v8H8z" fill="#185abd" stroke="none" />
            <path d="M8 24.500h27V32q0 1-1 1H9q-1 0-1-1z" fill="#103f91" stroke="none" />
            <rect x="0" y="7.500" width="18.500" height="18" rx="1.500" fill="#1650ad" stroke="none" />
          </Ico>
          <div className="absolute top-[8px] left-[2px] text-[14px] leading-[17px] font-bold text-white"><Fit w={14}>W</Fit></div>
        </div>
      </TaskSlot>
      <Ico w={36} h={24} className="ml-[253px]">
        <path d="M1.500 1.500h29v21h-27q-2 0-2-2zM30.500 5H34v15q0 2.500-3 2.500M6 6.500h20" strokeWidth="2.400" />
        <path d="M7 11.500h7v6H7zM17 11.500h9M17 17h9" strokeWidth="2.400" />
      </Ico>
      <Fit w={44} className="mt-[5px] ml-[12px] text-[20px] leading-none">31°C</Fit>
      <Ico w={18} h={10} className="-mt-1 ml-[26px]"><path d="M0.500 9.500L9 1l8.500 8.500" strokeWidth="1.500" /></Ico>
      <Ico w={18} h={22} className="ml-[19px]">
        <path d="M2 5h8q1 0 1 1v10q0 1-1 1H3q-2 0-2-2V7q0-2 2-2M11 9l5-3v10l-5-3M3 2q5-3 10 0M3 20q5 3 10 0" strokeWidth="1.500" />
      </Ico>
      <Ico w={24} h={18} className="ml-[14px]">
        <path d="M8 3.500h13v12H4v-5M21 7h2v5h-2" strokeWidth="1.500" />
        <path d="M9 5h11v9H6v-3q3-1 3-6z" fill="#000" stroke="none" />
        <path d="M1 3h6v3q0 3-3 3t-3-3zM2.500 0v3M5.500 0v3M4 9v5" strokeWidth="1.400" />
      </Ico>
      <Ico w={20} h={20} className="mt-[2px] ml-[15px]">
        <path d="M2 19Q2 4 18 1M7 19Q7 9 19 6" strokeWidth="1.400" className="text-[#666]" />
        <path d="M11 19q0-7 8-8M15 19q0-3 4-3.500" strokeWidth="1.500" />
        <circle cx="17" cy="18.500" r="1.400" fill="#000" stroke="none" />
      </Ico>
      <Ico w={22} h={20} className="ml-[14px]">
        <path d="M1 7h4l5-5v16l-5-5H1zM13 7q2 3 0 6" strokeWidth="1.500" />
        <path d="M16 5q4 5 0 10" strokeWidth="1.400" />
        <path d="M19 2q5 8 0 16" stroke="#888" strokeWidth="1.300" />
      </Ico>
      <div className="mt-[2px] ml-[15px] flex w-[96px] shrink-0 flex-col items-center text-[17px] leading-[28px]">
        <Fit w={45}>20:56</Fit>
        <Fit w={93}>28/10/2021</Fit>
      </div>
      <Ico w={24} h={24} className="ml-[28px]"><path d="M1 1h22v17.500h-7.500v4.500l-4.500-4.500H1z" strokeWidth="1.500" /></Ico>
      <div className="ml-[29px] h-full w-px shrink-0 bg-[#a0a0a0]" />
    </div>
  );
}

export default function App() {
  return (
    <div className={`flex h-[1080px] w-[1920px] flex-col overflow-hidden bg-[#f3f2f1] ${UI}`}>
      <TitleBar />
      <Tabs />
      <Ribbon />
      <div className="relative h-px shrink-0 bg-[#c8c6c4]">
        <div className="absolute top-px left-0 z-10 h-[9px] w-full bg-linear-to-b from-black/10 to-transparent" />
      </div>
      <Page />
      <StatusBar />
      <Taskbar />
    </div>
  );
}
